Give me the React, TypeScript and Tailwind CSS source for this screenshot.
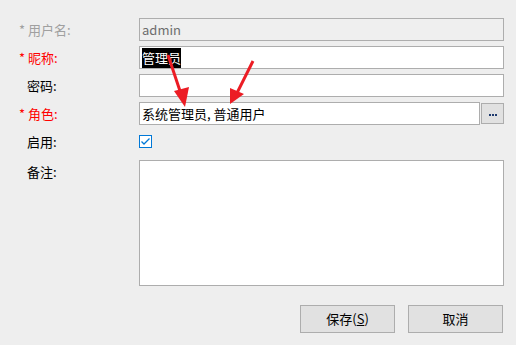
import React from "react";

const font = { fontFamily: '"Noto Sans CJK SC", "Noto Sans", sans-serif' };

const Label = ({ text, required, disabled }: { text: string; required?: boolean; disabled?: boolean }) => (
  <div
    className={
      "w-[139px] shrink-0 pl-[19px] text-[13px] leading-[23px] " +
      (disabled ? "text-[#a0a0a0]" : required ? "text-[#ff0000]" : "text-black")
    }
  >
    {required ? <span className="inline-block w-[9px]">*</span> : <span className="inline-block w-[8px]" />}
    {text}
  </div>
);

const Box = ({ children, disabled, className = "" }: { children?: React.ReactNode; disabled?: boolean; className?: string }) => (
  <div
    className={
      "h-[23px] border border-[#adadad] px-[2px] text-[13px] leading-[21px] " +
      (disabled ? "bg-[#efefef] text-[#6d6d6d] " : "bg-white text-black ") +
      className
    }
  >
    {children}
  </div>
);

export default function App() {
  return (
    <div className="relative w-[516px] h-[345px] bg-[#eeeeee] overflow-hidden" style={font}>
      <div className="flex flex-col pt-[18px] pr-[12px]">
        <div className="flex h-[23px]">
          <Label text="用户名:" required disabled />
          <Box disabled className="flex-1">admin</Box>
        </div>
        <div className="flex h-[23px] mt-[5px]">
          <Label text="昵称:" required />
          <Box className="flex-1">
            <span className="bg-black text-white inline-block leading-[20px] mt-[0px]">管理员</span>
          </Box>
        </div>
        <div className="flex h-[23px] mt-[5px]">
          <Label text="密码:" />
          <Box className="flex-1" />
        </div>
        <div className="flex h-[23px] mt-[5px]">
          <Label text="角色:" required />
          <Box className="flex-1">系统管理员, 普通用户</Box>
          <div className="ml-[1px] mt-[1px] h-[21px] w-[23px] border border-[#adadad] bg-[#e1e1e1] flex items-center justify-center">
            <div className="flex gap-[1px] mt-[2px]">
              <span className="w-[2px] h-[2px] bg-[#1f3a6e]" />
              <span className="w-[2px] h-[2px] bg-[#1f3a6e]" />
              <span className="w-[2px] h-[2px] bg-[#1f3a6e]" />
            </div>
          </div>
        </div>
        <div className="flex h-[23px] mt-[5px] items-center">
          <Label text="启用:" />
          <div className="w-[13px] h-[13px] border border-[#0078d7] bg-white flex items-center justify-center">
            <svg width="11" height="11" viewBox="0 0 11 11">
              <path d="M1.5 5.5 L4 8 L9.5 2.5" fill="none" stroke="#0078d7" strokeWidth="1.3" />
            </svg>
          </div>
        </div>
        <div className="flex mt-[7px]">
          <Label text="备注:" />
          <div className="flex-1 h-[126px] border border-[#adadad] bg-white" />
        </div>
        <div className="flex justify-end gap-[13px] mt-[19px] pr-[1px]">
          <button className="w-[95px] h-[28px] border border-[#adadad] bg-[#e1e1e1] text-[13px] text-black">
            保存(<span className="underline">S</span>)
          </button>
          <button className="w-[95px] h-[28px] border border-[#adadad] bg-[#e1e1e1] text-[13px] text-black">
            取消
          </button>
        </div>
      </div>
      <svg className="absolute left-0 top-0 pointer-events-none" width="516" height="345">
        <line x1="168" y1="55" x2="181" y2="94" stroke="#ec1c24" strokeWidth="3" />
        <polygon points="185,107 174,91 189,87" fill="#ec1c24" />
        <line x1="253" y1="61" x2="237" y2="93" stroke="#ec1c24" strokeWidth="3" />
        <polygon points="230,104 230,88 244,94" fill="#ec1c24" />
      </svg>
    </div>
  );
}
